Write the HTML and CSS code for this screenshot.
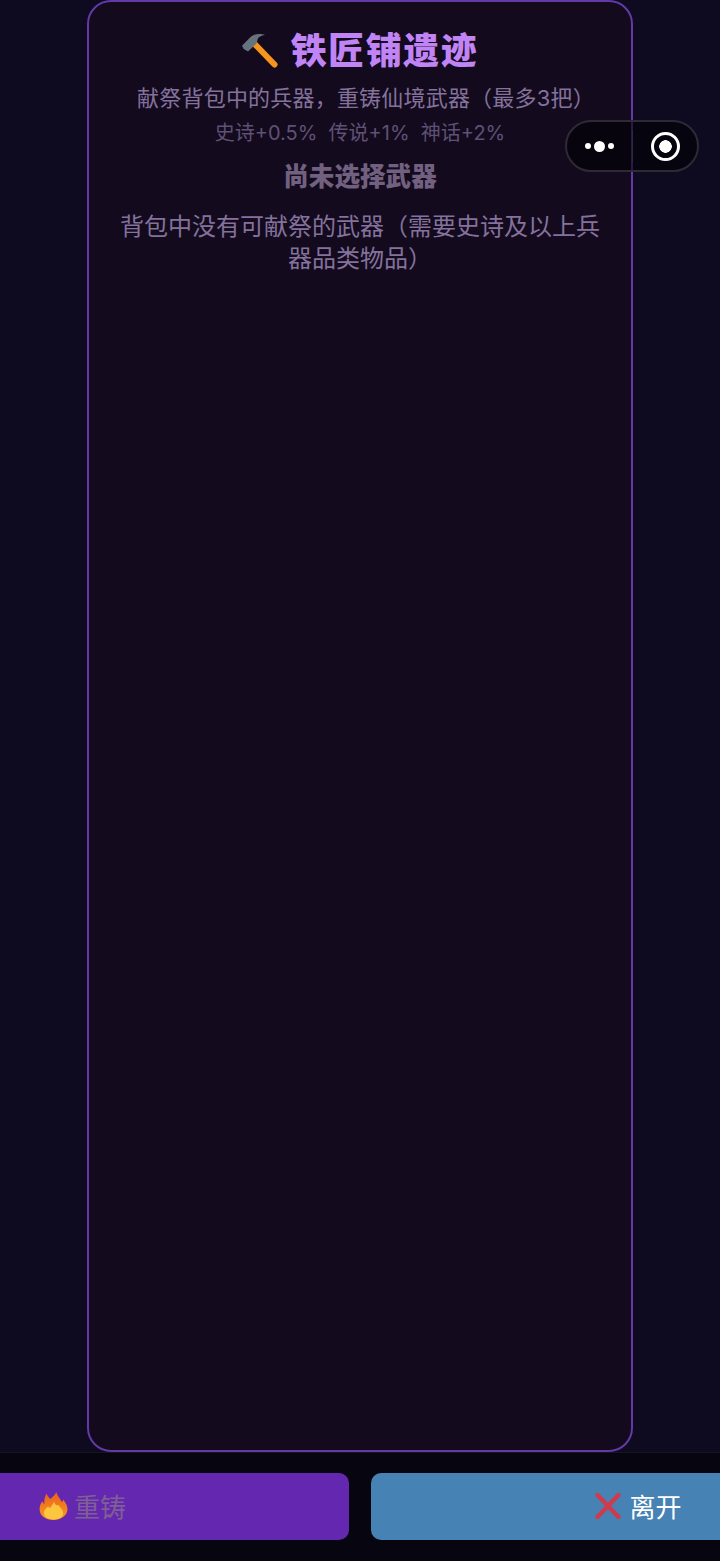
FILE: index.html
```html
<!DOCTYPE html>
<html lang="zh-CN">
<head>
    <meta charset="UTF-8">
    <meta name="viewport" content="width=device-width, initial-scale=1.0">
    <title>铁匠铺遗迹</title>
    <link rel="stylesheet" href="styles.css">
</head>
<body>
    <div class="page">
        <main class="main">
            <section class="panel">
                <h1 class="title">
                    <svg class="title-icon" viewBox="0 0 40 40">
                        <path d="M15 14.3 L34.5 34.5" stroke="#f7941d" stroke-width="6" stroke-linecap="round"/>
                        <path d="M2 15.7 L9.3 8.3 C12 5.5 15 4 19 4 C21.5 4 23.5 4.3 25 5 C21 5.5 18.5 7 17.7 9 L16.5 13.5 L8 21.5 L3.7 19 Z" fill="#67737c"/>
                    </svg>
                    <span>铁匠铺遗迹</span>
                </h1>
                <p class="subtitle">献祭背包中的兵器，重铸仙境武器（最多3把<span class="paren-end">）</span></p>
                <p class="rates">史诗+0.5%&nbsp;&nbsp;传说+1%&nbsp;&nbsp;神话+2%</p>
                <h2 class="selected">尚未选择武器</h2>
                <p class="empty">背包中没有可献祭的武器（需要史诗及以上兵器品类物品）</p>
            </section>
        </main>
        <footer class="actions">
            <button class="btn btn-forge" type="button">
                <svg class="btn-icon icon-flame" viewBox="-1 0 28 28">
                    <defs>
                        <linearGradient id="flame" x1="0" y1="0" x2="0" y2="1">
                            <stop offset="0" stop-color="#ea5f1c"/>
                            <stop offset="1" stop-color="#fb9a1f"/>
                        </linearGradient>
                    </defs>
                    <path d="M16 1 C17 5 20 7 21 10 C22 10 22.500 9 22.500 8 C25 11 26.500 14 26.500 17 C26.500 23 20 27 13.500 27 C6 27 0.500 23 0.500 17 C0.500 14 1.500 11.500 3 9.500 C3.500 10.500 4 11.500 5 12 C4.500 8 5.500 5 7 2.500 C8 5 9.500 6.500 11 7.500 C12 5.500 15 4 16 1 Z" fill="url(#flame)"/>
                    <path d="M14 10 C14.500 13 17 14 18 13 C20 15.500 22.500 18 22.500 20.500 C22.500 24.500 18.500 26.500 13.500 26.500 C8.500 26.500 4.500 24.500 4.500 20.500 C4.500 18 6.500 16 8.500 14.500 C9 15.500 10 16 10.500 15.500 C11.500 14 13 12.500 14 10 Z" fill="#fdc640"/>
                </svg>
                <span>重铸</span>
            </button>
            <button class="btn btn-leave" type="button">
                <svg class="btn-icon" viewBox="0 0 28 28">
                    <path d="M3.500 3 L24.500 25 M24.500 3 L3.500 25" stroke="#cf3a4d" stroke-width="4.400" stroke-linecap="round"/>
                </svg>
                <span>离开</span>
            </button>
        </footer>
    </div>
    <div class="capsule">
        <div class="capsule-more">
            <i class="dot"></i><i class="dot dot-big"></i><i class="dot"></i>
        </div>
        <div class="capsule-line"></div>
        <div class="capsule-close"><i class="ring"></i></div>
    </div>
</body>
</html>
```

FILE: styles.css
```css
html, body {
    margin: 0;
    padding: 0;
    height: 100%;
    background-color: #07050f;
}
body {
    font-family: "Inter", "Noto Sans CJK SC", sans-serif;
    overflow: hidden;
}
.page {
    display: flex;
    flex-direction: column;
    width: 720px;
    height: 1561px;
}
.main {
    display: flex;
    justify-content: center;
    height: 1452px;
    background-color: #0e0a1f;
    flex-shrink: 0;
}
.panel {
    box-sizing: border-box;
    width: 546px;
    height: 1452px;
    padding: 26px 30px 0;
    background-color: #130a1e;
    border: 2px solid #6339a8;
    border-radius: 24px;
    text-align: center;
}
.title {
    display: flex;
    align-items: center;
    justify-content: center;
    gap: 11px;
    height: 46px;
    margin: 0;
    padding-right: 2px;
    font-size: 36px;
    line-height: 46px;
    letter-spacing: 1.5px;
    font-weight: 900;
    color: #c184f5;
}
.title-icon {
    width: 40px;
    height: 40px;
    margin-bottom: 3px;
}
.subtitle {
    margin: 7px 0 0;
    font-size: 22px;
    line-height: 34px;
    letter-spacing: 0.2px;
    color: #84729c;
}
.paren-end {
    margin-right: -12px;
}
.rates {
    margin: 1px 0 0;
    font-size: 20px;
    line-height: 34px;
    color: #5f5175;
}
.selected {
    margin: 8px 0 0;
    font-size: 25.6px;
    line-height: 38px;
    font-weight: 900;
    color: #71607f;
}
.empty {
    margin: 15px 0 0;
    font-size: 24px;
    line-height: 32px;
    color: #84729c;
}
.actions {
    display: flex;
    justify-content: center;
    gap: 22px;
    padding-top: 20px;
    border-top: 1px solid #17131f;
}
.btn {
    display: flex;
    align-items: center;
    justify-content: center;
    gap: 7px;
    flex-shrink: 0;
    width: 534px;
    height: 67px;
    padding: 0 0 2px;
    border: none;
    border-radius: 10px;
    font-family: inherit;
    font-size: 26px;
}
.btn-forge {
    background-color: #6427b0;
    color: #7f5f96;
}
.btn-leave {
    background-color: #4682b4;
    color: #ffffff;
}
.btn-icon {
    width: 28px;
    height: 28px;
}
.icon-flame {
    width: 30px;
    height: 30px;
    margin-right: -1px;
}
.capsule {
    position: absolute;
    top: 120px;
    left: 565px;
    display: flex;
    align-items: center;
    box-sizing: border-box;
    width: 134px;
    height: 52px;
    background-color: rgba(0, 0, 0, 0.55);
    border: 2px solid #2e2a35;
    border-radius: 26px;
}
.capsule-more, .capsule-close {
    display: flex;
    align-items: center;
    justify-content: center;
    flex: 1;
    gap: 3px;
}
.capsule-line {
    width: 1px;
    height: 32px;
    background-color: #2f2b36;
}
.dot {
    width: 6px;
    height: 6px;
    border-radius: 50%;
    background-color: #fff;
}
.dot-big {
    width: 11px;
    height: 11px;
}
.ring {
    box-sizing: border-box;
    width: 29px;
    height: 29px;
    margin-left: 2px;
    border: 3px solid #fff;
    border-radius: 50%;
    background: radial-gradient(circle, #fff 0, #fff 6px, transparent 6.5px);
}
```
